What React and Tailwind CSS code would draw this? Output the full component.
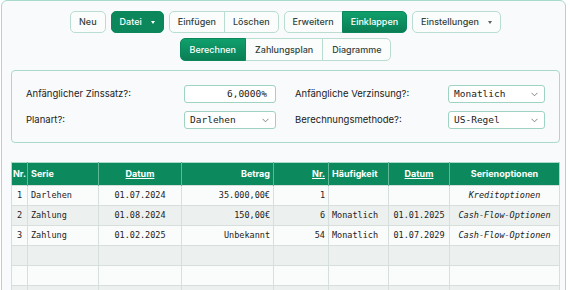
import React from "react";

const mono = "font-['DejaVu_Sans_Mono',monospace]";

function Caret({ color }) {
  return (
    <span
      className={
        "inline-block w-0 h-0 border-l-[2.5px] border-r-[2.5px] border-t-[3px] border-l-transparent border-r-transparent " +
        color
      }
    />
  );
}

function Btn({ children, active, caret }) {
  return (
    <button
      className={
        "h-[22px] px-[8px] flex items-center gap-[9px] text-[9px] font-medium border rounded-[5px] " +
        (active
          ? "bg-[#0b875b] border-[#0b875b] text-white"
          : "bg-[#fbfdfc] border-[#b9ddd0] text-[#33433d]")
      }
    >
      {children}
      {caret && <Caret color={active ? "border-t-white" : "border-t-[#55625d]"} />}
    </button>
  );
}

function Group({ items, h = "h-[22px]", px = "px-[8px]" }) {
  return (
    <div className="flex">
      {items.map((it, i) => (
        <button
          key={it.label}
          className={
            h +
            " " +
            px +
            " text-[9px] font-medium border " +
            (i === 0 ? "rounded-l-[5px] " : "-ml-px ") +
            (i === items.length - 1 ? "rounded-r-[5px] " : "") +
            (it.active
              ? "bg-gradient-to-b from-[#10a06c] to-[#0a7e55] border-[#0b875b] text-white relative"
              : "bg-[#fbfdfc] border-[#b9ddd0] text-[#33433d]")
          }
        >
          {it.label}
        </button>
      ))}
    </div>
  );
}

function Select({ value, w }) {
  return (
    <div
      className={
        "h-[18px] flex items-center justify-between pl-[5px] pr-[6px] bg-white border border-[#9fd3c1] rounded-[3px] text-[9.5px] text-[#222] " +
        mono +
        " " +
        w
      }
    >
      <span>{value}</span>
      <svg width="7" height="5" viewBox="0 0 7 5" fill="none" stroke="#777" strokeWidth="0.9">
        <path d="M0.5 0.8 L3.5 3.8 L6.5 0.8" />
      </svg>
    </div>
  );
}

const rows = [
  ["1", "Darlehen", "01.07.2024", "35.000,00€", "1", "", "", "Kreditoptionen"],
  ["2", "Zahlung", "01.08.2024", "150,00€", "6", "Monatlich", "01.01.2025", "Cash-Flow-Optionen"],
  ["3", "Zahlung", "01.02.2025", "Unbekannt", "54", "Monatlich", "01.07.2029", "Cash-Flow-Optionen"],
  ["", "", "", "", "", "", "", ""],
  ["", "", "", "", "", "", "", ""],
  ["", "", "", "", "", "", "", ""],
];

const widths = ["w-[16px]", "w-[71px]", "w-[83px]", "w-[92px]", "w-[55px]", "w-[60px]", "w-[61px]", "w-[110px]"];

export default function App() {
  return (
    <div className="w-[570px] h-[290px] overflow-hidden bg-white font-['Inter',sans-serif]">
      <div className="ml-px w-[565px] h-[300px] border border-[#a9d9c8] rounded-[6px] bg-[#f8fafb] pt-[10px] pl-[9px]">
        {/* toolbar */}
        <div className="w-[549px] flex justify-center gap-[5px]">
          <Btn>Neu</Btn>
          <Btn active caret>Datei</Btn>
          <Group items={[{ label: "Einfügen" }, { label: "Löschen" }]} />
          <Group items={[{ label: "Erweitern" }, { label: "Einklappen", active: true }]} />
          <Btn caret>Einstellungen</Btn>
        </div>
        <div className="w-[549px] flex justify-center mt-[5px]">
          <Group
            h="h-[23px]"
            px="px-[9px]"
            items={[{ label: "Berechnen", active: true }, { label: "Zahlungsplan" }, { label: "Diagramme" }]}
          />
        </div>

        {/* form */}
        <div className="w-[549px] h-[73px] mt-[9px] border border-[#a9d9c8] rounded-[4px] pt-[14px] pl-[14px] text-[9.5px] text-[#222]">
          <div className="flex items-center h-[18px]">
            <div className="w-[158px]">Anfänglicher Zinssatz?:</div>
            <div className={"w-[92px] h-[18px] flex items-center justify-end pr-[8px] bg-white border border-[#9fd3c1] rounded-[3px] text-[9.5px] " + mono}>
              6,0000%
            </div>
            <div className="w-[153px] ml-[19px]">Anfängliche Verzinsung?:</div>
            <Select value="Monatlich" w="w-[97px]" />
          </div>
          <div className="flex items-center h-[18px] mt-[8px]">
            <div className="w-[158px]">Planart?:</div>
            <Select value="Darlehen" w="w-[92px]" />
            <div className="w-[153px] ml-[19px]">Berechnungsmethode?:</div>
            <Select value="US-Regel" w="w-[97px]" />
          </div>
        </div>

        {/* table */}
        <table className="mt-[19px] w-[549px] table-fixed border-collapse border border-[#a9d9c8] text-[9px]">
          <thead>
            <tr className="h-[23px] bg-[#0c8a5d] text-white text-[9px] font-semibold">
              <th className={widths[0] + " px-[1px] text-left border-r border-[#5fb996]"}>Nr.</th>
              <th className={widths[1] + " px-[3px] text-left border-r border-[#5fb996]"}>Serie</th>
              <th className={widths[2] + " text-center underline border-r border-[#5fb996]"}>Datum</th>
              <th className={widths[3] + " px-[3px] text-right border-r border-[#5fb996]"}>Betrag</th>
              <th className={widths[4] + " px-[3px] text-right underline border-r border-[#5fb996]"}>Nr.</th>
              <th className={widths[5] + " px-[3px] text-left border-r border-[#5fb996]"}>Häufigkeit</th>
              <th className={widths[6] + " text-center underline border-r border-[#5fb996]"}>Datum</th>
              <th className={widths[7] + " text-center"}>Serienoptionen</th>
            </tr>
          </thead>
          <tbody className={mono + " text-[#222] text-[8.5px]"}>
            {rows.map((r, i) => (
              <tr key={i} className={"h-[20px] " + (i % 2 === 1 ? "bg-[#ecf1ef]" : "bg-[#fafbfb]")}>
                <td className="border border-[#d6dfdb] text-center">{r[0]}</td>
                <td className="border border-[#d6dfdb] px-[3px]">{r[1]}</td>
                <td className="border border-[#d6dfdb] text-center">{r[2]}</td>
                <td className="border border-[#d6dfdb] px-[3px] text-right">{r[3]}</td>
                <td className="border border-[#d6dfdb] px-[3px] text-right">{r[4]}</td>
                <td className="border border-[#d6dfdb] px-[3px]">{r[5]}</td>
                <td className="border border-[#d6dfdb] text-center">{r[6]}</td>
                <td className="border border-[#d6dfdb] text-center italic">{r[7]}</td>
              </tr>
            ))}
          </tbody>
        </table>
      </div>
    </div>
  );
}
